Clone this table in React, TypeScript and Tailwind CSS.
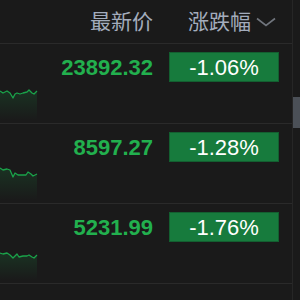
import React from 'react';

type Row = { price: string; change: string; line: number[][] };

const rows: Row[] = [
  {
    price: '23892.32',
    change: '-1.06%',
    line: [[0, 5], [3, 7], [7, 5], [10, 7], [13, 12], [15, 8], [17, 7], [20, 8], [23, 7], [27, 6], [29, 4], [32, 7], [34, 8], [37, 5]],
  },
  {
    price: '8597.27',
    change: '-1.28%',
    line: [[0, 2], [3, 4], [7, 3], [10, 4], [13, 11], [15, 7], [18, 9], [22, 9], [26, 9], [28, 6], [31, 8], [33, 10], [37, 8]],
  },
  {
    price: '5231.99',
    change: '-1.76%',
    line: [[0, 7], [3, 8], [7, 7], [10, 9], [13, 12], [17, 8], [19, 11], [23, 10], [27, 10], [29, 9], [32, 11], [34, 12], [37, 9]],
  },
];

function Spark({ pts, id }: { pts: number[][]; id: string }) {
  const d = pts.map((p, i) => `${i === 0 ? 'M' : 'L'}${p[0]} ${p[1]}`).join(' ');
  return (
    <svg width="40" height="34" viewBox="0 0 40 34" className="block">
      <defs>
        <linearGradient id={id} x1="0" y1="0" x2="0" y2="1">
          <stop offset="0" stopColor="#1aa34a" stopOpacity="0.18" />
          <stop offset="1" stopColor="#1aa34a" stopOpacity="0" />
        </linearGradient>
      </defs>
      <path d={`${d} L37 34 L0 34 Z`} fill={`url(#${id})`} />
      <path d={d} fill="none" stroke="#1aa34a" strokeWidth="1.3" strokeLinejoin="round" />
    </svg>
  );
}

export default function App() {
  return (
    <div
      className="w-[300px] h-[300px] bg-[#1a1a1a] overflow-hidden flex"
      style={{ fontFamily: '"Liberation Sans", "Noto Sans CJK SC", sans-serif' }}
    >
      <div className="w-[292px] flex flex-col">
        <div className="h-[44px] border-b border-[#2a2a2a] flex items-center text-[21px] text-[#a3acbc]">
          <div className="w-[153px] text-right">最新价</div>
          <div className="ml-[35px] flex items-center">
            <span>涨跌幅</span>
            <svg width="20" height="10" viewBox="0 0 20 10" className="ml-[5px] mt-[1px]">
              <path d="M1 1.5 L10 8.5 L19 1.5" fill="none" stroke="#70757d" strokeWidth="1.6" />
            </svg>
          </div>
        </div>
        {rows.map((r, i) => (
          <div key={i} className="h-[80px] border-b border-[#2a2a2a] flex flex-col pt-[8px]">
            <div className="flex items-center h-[30px]">
              <div className="w-[153px] text-right text-[22px] font-bold text-[#22b04e]">{r.price}</div>
              <div className="ml-[16px] w-[110px] h-[30px] bg-[#177b3d] border border-[#135f30] flex items-center justify-center text-[22px] text-white">
                {r.change}
              </div>
            </div>
            <div className="mt-[4px]">
              <Spark pts={r.line} id={`g${i}`} />
            </div>
          </div>
        ))}
      </div>
      <div className="flex-1 border-l border-[#262626] flex flex-col">
        <div className="mt-[97px] h-[31px] bg-[#4b5057]" />
      </div>
    </div>
  );
}
